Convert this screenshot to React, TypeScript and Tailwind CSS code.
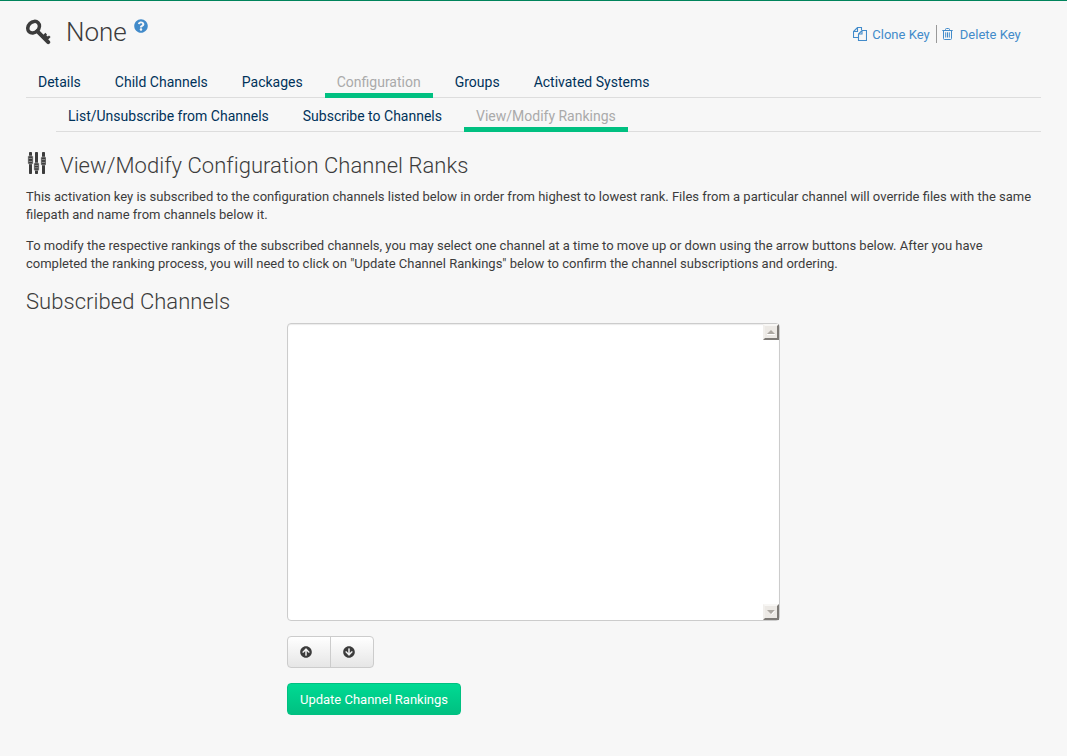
import React from "react";
import { FaQuestionCircle, FaArrowCircleUp, FaArrowCircleDown } from "react-icons/fa";

const mainTabs = ["Details", "Child Channels", "Packages", "Configuration", "Groups", "Activated Systems"];
const subTabs = ["List/Unsubscribe from Channels", "Subscribe to Channels", "View/Modify Rankings"];

function Tabs({ items, active }: { items: string[]; active: string }) {
  return (
    <div className="flex h-full gap-2.5 text-sm leading-5 text-[#00325a]">
      {items.map((t) => (
        <a
          key={t}
          className={
            t === active
              ? "-mb-px border-b-[5px] border-[#00c081] px-3 pt-1.5 text-[#aaa]"
              : "-mb-px px-3 pt-1.5"
          }
        >
          {t}
        </a>
      ))}
    </div>
  );
}

function KeyIcon() {
  return (
    <svg width="26" height="26" viewBox="0 0 26 26" fill="none" stroke="#3c3c3c" className="mt-[18px] shrink-0">
      <ellipse cx="7.6" cy="8.2" rx="6.4" ry="5.2" transform="rotate(-45 7.6 8.2)" strokeWidth="3.5" />
      <path d="M11.2 12.2 L22.2 23.2" strokeWidth="4" strokeLinecap="round" />
      <path d="M17.2 17.6 L20.2 14.6 M20.6 20.4 L23.8 17.2 M19 16.6 L21.5 18.8" strokeWidth="2.3" />
    </svg>
  );
}

function SlidersIcon() {
  return (
    <svg width="20" height="24" viewBox="0 0 20 24" fill="#3c3c3c" className="mt-[19px] shrink-0">
      <rect x="3" y="1" width="3" height="22" rx=".7" />
      <rect x="9" y="1" width="3" height="22" rx=".7" />
      <rect x="16" y="1" width="3" height="22" rx=".7" />
      <g stroke="#c4c4c4" strokeWidth=".6">
        <rect x="2" y="4.9" width="5" height="8" rx=".6" />
        <rect x="8" y="11.9" width="5" height="7.4" rx=".6" />
        <rect x="15" y="6" width="5" height="8" rx=".6" />
      </g>
      <path
        d="M2.8 7.4h3.4M2.8 10.4h3.4M8.8 14.4h3.4M8.8 16.8h3.4M15.8 8.6h3.4M15.8 11.4h3.4"
        stroke="#a5a5a5"
        strokeWidth=".8"
      />
    </svg>
  );
}

function CopyIcon() {
  return (
    <svg width="14" height="14" viewBox="0 0 14 14" fill="none" stroke="currentColor" strokeWidth="1.1">
      <path d="M5 10.5H.5V4.5L4.5.5H8.5V3M4.5.5V4.5H.5M5.5 13.5V7L9 3.5H13.5V13.5ZM9 3.5V7H5.5" />
    </svg>
  );
}

function TrashIcon() {
  return (
    <svg width="11" height="12" viewBox="0 0 11 12" fill="none" stroke="currentColor" strokeWidth="1">
      <path d="M.3 2.5H10.7M3.5 2.5V1.5Q3.5.5 4.5.5H6.5Q7.5.5 7.5 1.5V2.5M1.5 2.5V10.5Q1.5 11.5 2.5 11.5H8.5Q9.5 11.5 9.5 10.5V2.5M3.7 4.3V9.5M5.5 4.3V9.5M7.3 4.3V9.5" />
    </svg>
  );
}

function ScrollButton({ down = false }: { down?: boolean }) {
  return (
    <span className="flex size-4 items-center justify-center border-2 border-t-[#f8f7f5] border-r-[#7d7a76] border-b-[#7d7a76] border-l-[#f1efec] bg-[#ece9e5]">
      <svg width="8" height="5" viewBox="0 0 8 5">
        <path d={down ? "M0 0H8L4 4Z" : "M4 0L8 4H0Z"} fill="#aca8a2" />
        <path d={down ? "M8 .5L4.5 4.5" : "M0 4.5H8"} stroke="white" />
      </svg>
    </span>
  );
}

export default function App() {
  return (
    <div className="h-[756px] w-[1067px] overflow-hidden border-t border-[#00845c] bg-[#f7f7f7] px-[26px] font-['Roboto',sans-serif] text-[13px] leading-[18px] text-[#3c3c3c]">
      <header className="flex h-[65px] justify-between">
        <h1 className="flex text-[26px] leading-9 font-light">
          <KeyIcon />
          <span className="ml-3.5 pt-[13px]">None</span>
          <FaQuestionCircle className="mt-[18px] ml-[7px] size-3.5 text-[#428bca]" />
        </h1>
        <div className="mt-6 flex h-[18px] pr-[20.4px] text-[#428bca]">
          <a className="flex items-center"><CopyIcon /><span className="ml-[5px] pt-px">Clone Key</span></a>
          <span className="ml-[6.6px] h-[18px] w-px bg-[#999]" />
          <a className="ml-[5px] flex items-center"><TrashIcon /><span className="ml-[6.6px] pt-px">Delete Key</span></a>
        </div>
      </header>
      <nav className="h-8 border-b border-[#ddd]">
        <Tabs items={mainTabs} active="Configuration" />
      </nav>
      <nav className="ml-[30px] h-[34px] border-b border-[#ddd] pt-0.5">
        <Tabs items={subTabs} active="View/Modify Rankings" />
      </nav>
      <h2 className="flex h-14 text-[22px] leading-8 font-light">
        <SlidersIcon />
        <span className="ml-3.5 pt-[18px] tracking-[0.05px]">View/Modify Configuration Channel Ranks</span>
      </h2>
      <p className="mb-[13px]">
        This activation key is subscribed to the configuration channels listed below in order from highest to lowest rank. Files from a particular channel will override files with the same
        <br />filepath and name from channels below it.
      </p>
      <p>
        To modify the respective rankings of the subscribed channels, you may select one channel at a time to move up or down using the arrow buttons below. After you have
        <br />completed the ranking process, you will need to click on "Update Channel Rankings" below to confirm the channel subscriptions and ordering.
      </p>
      <h2 className="pt-[13px] text-[22px] leading-8 font-light tracking-[0.05px]">Subscribed Channels</h2>
      <div className="mt-[5px] ml-[261px]">
        <div className="flex h-[298px] w-[493px] flex-col items-end justify-between rounded-[4px] border border-[#ccc] bg-white shadow-[inset_0_1px_1px_rgba(0,0,0,0.08)]">
          <ScrollButton />
          <ScrollButton down />
        </div>
        <div className="mt-[15px] flex h-8 w-[87px] rounded-[4px] border border-[#ccc] bg-linear-to-b from-white to-[#e6e6e6]">
          <button className="flex w-[43px] items-center border-r border-[#ccc] pl-3"><FaArrowCircleUp className="size-3" /></button>
          <button className="flex items-center pl-3"><FaArrowCircleDown className="size-3" /></button>
        </div>
        <button className="mt-[15px] block h-8 w-[174px] rounded-[4px] border border-[#00c081] bg-linear-to-b from-[#00da93] to-[#00c081] pt-0.5 text-white">
          Update Channel Rankings
        </button>
      </div>
    </div>
  );
}
